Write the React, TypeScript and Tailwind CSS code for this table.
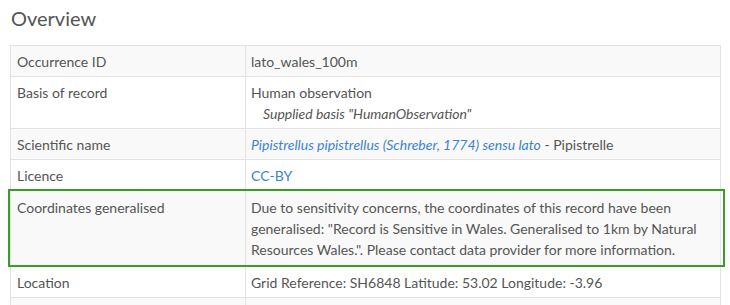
import React from "react";

const Row = ({
  label,
  children,
  gray,
  highlight,
}: {
  label: string;
  children: React.ReactNode;
  gray?: boolean;
  highlight?: boolean;
}) => (
  <div className={`relative flex border-b border-[#e2e2e2] ${gray ? "bg-[#f9f9f9]" : "bg-white"}`}>
    <div className={`w-[235px] shrink-0 border-r border-[#e2e2e2] px-[6px] ${highlight ? "py-[6px]" : "pt-[5px] pb-[4px]"}`}>
      {label}
    </div>
    <div className={`flex-1 px-[5px] ${highlight ? "py-[6px]" : "pt-[5px] pb-[4px]"}`}>{children}</div>
    {highlight && (
      <div className="pointer-events-none absolute -left-[3px] -right-[5px] -top-[2px] -bottom-[1px] border-2 border-[#3c9c2a]" />
    )}
  </div>
);

export default function App() {
  return (
    <div
      className="h-[305px] w-[730px] overflow-hidden bg-white text-[14px] leading-[21px] text-[#555]"
      style={{ fontFamily: "Lato, 'Open Sans', sans-serif" }}
    >
      <h2 className="ml-[11px] pt-[5px] text-[20px] leading-[26px] text-[#555]">Overview</h2>
      <div className="ml-[10px] mt-[14px] w-[711px] border-l border-r border-t border-[#e2e2e2]">
        <Row label="Occurrence ID" gray>
          lato_wales_100m
        </Row>
        <Row label="Basis of record">
          <div>Human observation</div>
          <div className="pl-[12px] italic">Supplied basis "HumanObservation"</div>
        </Row>
        <Row label="Scientific name" gray>
          <span className="italic text-[#3a83d2]">Pipistrellus pipistrellus (Schreber, 1774) sensu lato</span> - Pipistrelle
        </Row>
        <Row label="Licence">
          <span className="text-[#3a83d2]">CC-BY</span>
        </Row>
        <Row label="Coordinates generalised" gray highlight>
          Due to sensitivity concerns, the coordinates of this record have been generalised: "Record is Sensitive in Wales. Generalised to 1km by Natural Resources Wales.". Please contact data provider for more information.
        </Row>
        <Row label="Location">Grid Reference: SH6848 Latitude: 53.02 Longitude: -3.96</Row>
        <Row label="" gray>
          &nbsp;
        </Row>
      </div>
    </div>
  );
}
